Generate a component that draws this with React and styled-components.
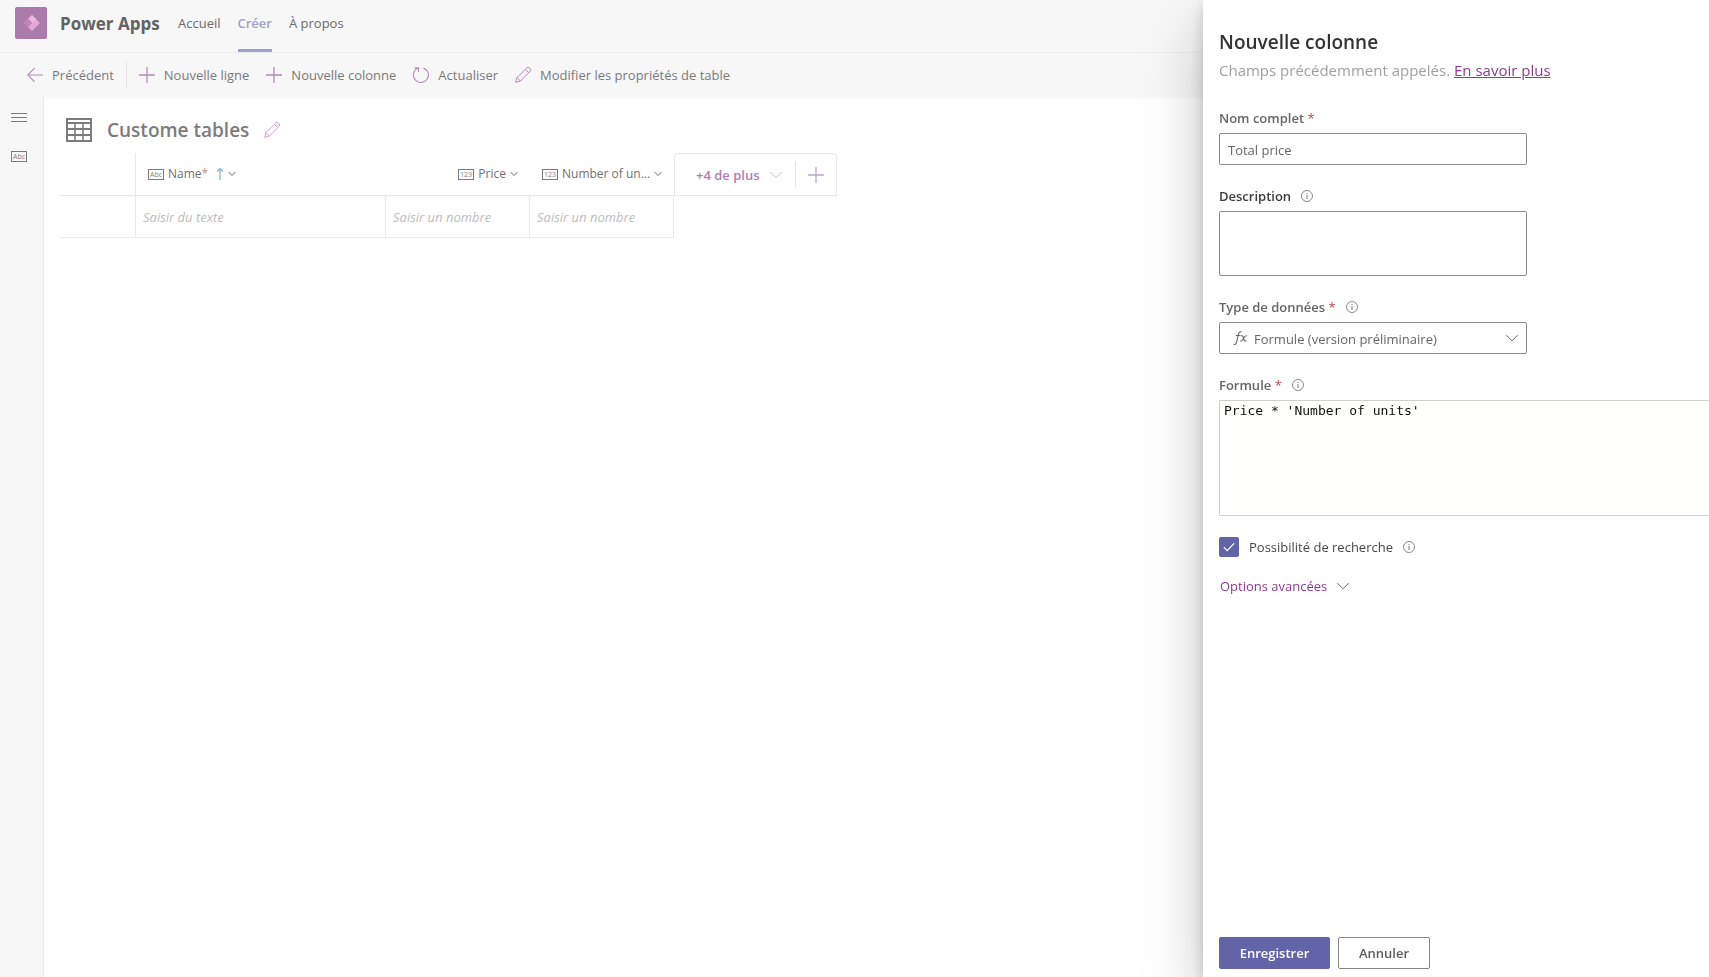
import React from "react";
import styled, { createGlobalStyle, css } from "styled-components";

const GlobalStyle = createGlobalStyle`
  *, *::before, *::after { box-sizing: border-box; }
  html, body, #root { height: 100%; }
  body {
    margin: 0;
    overflow: hidden;
    background: #fff;
    color: #6e6e6e;
    font: 14px/20px "Segoe UI", "Open Sans", "Noto Sans", sans-serif;
  }
  button, input, textarea, select { font: inherit; color: inherit; }
  button { padding: 0; border: 0; background: none; cursor: pointer; white-space: nowrap; }
  svg { display: block; flex: none; }
`;

const Shell = styled.div`
  display: flex;
  flex-direction: column;
  min-height: 100%;
`;

const Header = styled.header`
  display: flex;
  align-items: stretch;
  height: 53px;
  padding-left: 15px;
  background: #f7f7f7;
  border-bottom: 1px solid #efefef;
`;

const Brand = styled.div`
  display: flex;
  align-items: flex-start;
  gap: 13px;
  width: 155px;
  padding-top: 7px;
  color: #636363;
  font-size: 17px;
  font-weight: 700;
  line-height: 34px;
  white-space: nowrap;
`;

const Nav = styled.nav`
  display: flex;
  gap: 17px;
  padding-left: 8px;
`;

const NavLink = styled.a`
  padding-top: 13px;
  color: #6a6a6a;
  font-size: 13px;
  text-decoration: none;
  border-bottom: 3px solid transparent;
  ${(p) =>
    p.$active &&
    css`
      color: #a0a0cb;
      font-weight: 600;
      border-color: #a0a0cb;
    `}
`;

const Toolbar = styled.div`
  display: flex;
  align-items: center;
  gap: 12px;
  height: 44px;
  padding-left: 27px;
  background: #f7f7f7;
  box-shadow: 0 1px 4px rgba(0, 0, 0, 0.03);
`;

const ToolGroup = styled.div`
  display: flex;
  gap: 17px;
`;

const ToolButton = styled.button`
  display: flex;
  align-items: center;
  gap: 9px;
  color: #7a7a7a;
  font-size: 13px;
  svg { color: #b58bb8; }
`;

const Divider = styled.span`
  width: 1px;
  height: ${(p) => p.$height}px;
  background: #e6e6e6;
`;

const Body = styled.div`
  display: flex;
  flex: 1;
`;

const Rail = styled.aside`
  display: flex;
  flex-direction: column;
  align-items: flex-start;
  gap: 26px;
  width: 44px;
  padding: 12px 11px;
  background: #f7f7f7;
  border-right: 1px solid #ebebeb;
`;

const RailButton = styled.button`
  display: flex;
  color: #7c7c7c;
`;

const Main = styled.main`
  flex: 1;
  padding: 16px;
`;

const TitleRow = styled.div`
  display: flex;
  align-items: center;
  gap: 15px;
  height: 34px;
  padding-left: 6px;
  color: #7c7c7c;
`;

const Title = styled.h1`
  margin: 0;
  font-size: 19px;
  line-height: 28px;
  font-weight: 600;
`;

const EditButton = styled.button`
  display: flex;
  color: #d99bd2;
`;

const Grid = styled.div`
  display: flex;
  align-items: flex-start;
  margin-top: 6px;
`;

const Table = styled.table`
  width: 614px;
  table-layout: fixed;
  border-collapse: separate;
  border-spacing: 0;
`;

const HeadCell = styled.th`
  width: ${(p) => p.$width}px;
  height: 43px;
  padding: 0 12px;
  border-bottom: 1px solid #e8e8e8;
  border-right: ${(p) => (p.$ruled ? "1px solid #e8e8e8" : "0")};
`;

const ColumnButton = styled.button`
  display: flex;
  align-items: center;
  gap: 4px;
  height: 20px;
  margin-left: ${(p) => (p.$end ? "auto" : "0")};
  color: #707070;
  font-size: 12px;
  font-weight: 500;
`;

const SortMarks = styled.span`
  display: flex;
  align-items: center;
`;

const Cell = styled.td`
  height: 42px;
  padding: 0 7px;
  border-right: 1px solid #e8e8e8;
  border-bottom: 1px solid #e8e8e8;
`;

const CellInput = styled.input`
  width: 100%;
  padding: 0;
  border: 0;
  outline: 0;
  background: none;
  font-size: 13px;
  font-style: italic;
  &::placeholder { color: #bcbcbc; opacity: 1; }
`;

const MoreBox = styled.div`
  display: flex;
  align-items: center;
  width: 163px;
  height: 43px;
  padding: 0 12px 0 21px;
  border: 1px solid #e8e8e8;
  border-radius: 4px 4px 0 0;
`;

const MoreButton = styled.button`
  display: flex;
  align-items: center;
  gap: 10px;
  color: #ae7fb0;
  font-size: 13px;
  font-weight: 600;
  svg { color: #c0c0c0; }
`;

const AddButton = styled.button`
  display: flex;
  align-items: center;
  gap: 12px;
  margin-left: auto;
  color: #bba9c2;
`;

const Star = styled.span`
  color: ${(p) => (p.$dim ? "#d08a8c" : "#b8474a")};
  font-weight: 400;
`;

const Panel = styled.aside`
  position: fixed;
  top: 0;
  right: 0;
  bottom: 0;
  display: flex;
  flex-direction: column;
  width: 506px;
  padding: 28px 0 8px 16px;
  overflow: hidden;
  background: #fff;
  box-shadow: 0 26px 58px rgba(0, 0, 0, 0.22), 0 5px 14px rgba(0, 0, 0, 0.18);
`;

const PanelTitle = styled.h2`
  margin: 0;
  color: #323232;
  font-size: 19px;
  line-height: 28px;
  font-weight: 600;
`;

const Intro = styled.p`
  margin: 3px 0 25px;
  color: #a0a0a0;
  font-size: 15px;
  line-height: 22px;
  a { color: #8f3a92; }
`;

const Field = styled.div`
  width: ${(p) => (p.$wide ? "auto" : "308px")};
  margin-bottom: ${(p) => (p.$wide ? 21 : 19)}px;
`;

const LabelRow = styled.div`
  display: flex;
  align-items: center;
  gap: 10px;
  height: 24px;
  margin-bottom: 3px;
  color: ${(p) => (p.$strong ? "#3c3c3c" : "#666")};
  font-size: 13px;
  font-weight: 600;
`;

const control = css`
  display: block;
  width: 100%;
  border: 1px solid #8c8c8c;
  border-radius: 2px;
  outline: 0;
  background: #fff;
  color: #666;
  font-size: 13px;
`;

const TextInput = styled.input`
  ${control}
  height: 32px;
  padding: 1px 8px 0;
`;

const TextArea = styled.textarea`
  ${control}
  height: 65px;
  padding: 6px 8px;
  resize: none;
`;

const SelectBox = styled.div`
  display: flex;
  position: relative;
  color: #666;
`;

const Select = styled.select`
  ${control}
  height: 32px;
  padding: 1px 32px 0 34px;
  appearance: none;
`;

const SelectMark = styled.span`
  position: absolute;
  top: 0;
  bottom: 0;
  ${(p) => p.$side}: ${(p) => (p.$side === "left" ? 14 : 9)}px;
  display: flex;
  align-items: center;
  pointer-events: none;
`;

const Editor = styled.textarea`
  display: block;
  width: 100%;
  height: 116px;
  padding: 0 4px;
  border: 1px solid #cfcfcf;
  border-right: 0;
  border-radius: 2px 0 0 2px;
  outline: 0;
  resize: none;
  background: #fffffd;
  color: #111;
  font: 13px/19px Consolas, "DejaVu Sans Mono", "Liberation Mono", monospace;
`;

const CheckRow = styled.div`
  display: flex;
  align-items: center;
  gap: 10px;
  height: 20px;
  color: #484848;
  font-size: 13px;
`;

const CheckHolder = styled.span`
  display: grid;
  width: 20px;
  height: 20px;
  > * { grid-area: 1 / 1; }
  svg { pointer-events: none; color: #fff; place-self: center; }
`;

const Checkbox = styled.input`
  width: 20px;
  height: 20px;
  margin: 0;
  appearance: none;
  border: 1px solid #6264a7;
  border-radius: 2px;
  &:checked { background: #6264a7; }
`;

const Advanced = styled.button`
  display: flex;
  align-items: center;
  align-self: flex-start;
  gap: 10px;
  margin: 19px 0 0 1px;
  color: #8f3a92;
  font-size: 13px;
  svg { color: #666; }
`;

const Footer = styled.footer`
  display: flex;
  gap: 8px;
  margin-top: auto;
`;

const ActionButton = styled.button`
  width: ${(p) => (p.$primary ? 111 : 92)}px;
  height: 32px;
  border: 1px solid ${(p) => (p.$primary ? "#6264a7" : "#868686")};
  border-radius: 2px;
  background: ${(p) => (p.$primary ? "#6264a7" : "#fff")};
  color: ${(p) => (p.$primary ? "#fff" : "#5c5c5c")};
  font-size: 13px;
  font-weight: 600;
`;

const Icon = ({ size = 16, box = 16, children, ...rest }) => (
  <svg
    width={size}
    height={size}
    viewBox={`0 0 ${box} ${box}`}
    fill="none"
    stroke="currentColor"
    aria-hidden="true"
    {...rest}
  >
    {children}
  </svg>
);

const Plus = () => <Icon strokeWidth="1.3"><path d="M8 0v16M0 8h16" /></Icon>;
const Back = () => <Icon strokeWidth="1.1"><path d="M16 8H.8M7.6 1.2L.8 8l6.8 6.8" /></Icon>;
const Refresh = () => (
  <Icon strokeWidth="1.1"><path d="M10.3.9A7.5 7.5 0 1 1 5 1.1M1.6.9H5.6V5" /></Icon>
);
const Pencil = () => (
  <Icon>
    <path d="M.7 15.3l1.2-4.7L11.8.9a1.9 1.9 0 0 1 2.7 0l.6.6a1.9 1.9 0 0 1 0 2.7L5.4 14.1zM10.4 2.3l3.3 3.3M1.9 10.6l3.5 3.5" />
  </Icon>
);
const Chevron = () => (
  <Icon size={12} box={12}>
    <path d="M.4 3.2L6 8.8l5.6-5.6" />
  </Icon>
);
const SmallChevron = () => (
  <Icon size={8} box={8} stroke="#a8a8a8" strokeWidth="1.2">
    <path d="M.5 2L4 5.5 7.5 2" />
  </Icon>
);
const SortUp = () => (
  <Icon stroke="#7fb0da" strokeWidth="1.2">
    <path d="M8 14V2.5M5 5.5l3-3 3 3" />
  </Icon>
);
const Info = () => (
  <Icon size={12} box={12} stroke="#6a6a6a">
    <circle cx="6" cy="6" r="5.5" strokeWidth=".8" />
    <path d="M6 5v4M6 3v1" strokeWidth=".9" />
  </Icon>
);
const TypeBadge = ({ text }) => (
  <svg width="16" height="11" viewBox="0 0 16 11" aria-hidden="true">
    <rect x=".5" y=".5" width="15" height="10" fill="none" stroke="#7c7c7c" />
    <text x="8" y="8" fontSize="7" textAnchor="middle" fill="#7c7c7c">{text}</text>
  </svg>
);
const TableIcon = () => (
  <svg width="26" height="24" viewBox="0 0 26 24" fill="none" stroke="currentColor" strokeWidth="2" aria-hidden="true">
    <path d="M1 1h24v22H1zM1 5h24M1 11h24M1 17h24" />
    <path d="M9 5v18M17 5v18" strokeWidth="1.5" />
  </svg>
);
const Logo = () => (
  <svg width="32" height="32" viewBox="0 0 32 32" aria-hidden="true">
    <rect width="32" height="32" rx="2" fill="#ab7bab" />
    <path d="M17 8l8 8-8 8-8-8z" fill="#c27fb9" />
    <path d="M17 8l7.4 7.4a1 1 0 0 1 0 1.2L17 24l-4-4 4-4-4-4z" fill="#e4a9d8" />
    <path d="M13.5 11.5L17 8l4 4-4 4z" fill="#efc3e4" opacity=".6" />
    <path d="M8 16l5-4.5 4 4.5-4 4z" fill="#c583bd" />
  </svg>
);
const Fx = () => (
  <Icon strokeWidth="1.1">
    <path d="M.6 14.3c2 .6 2.7-.8 3.2-3L5.5 4.2C6 2 7 1.3 8.8 1.9M2.8 5.5h4.7M8 6c1.5-.8 2 0 2.5 2.1.6 2.5 1.2 3.7 3 2.5M14 5.8c-1.6-.5-2.6 1-3.5 2.6-.9 1.6-1.7 2.9-3.2 2.5" />
  </Icon>
);

export default function App() {
  return (
    <>
      <GlobalStyle />
      <Shell>
        <Header>
          <Brand><Logo />Power Apps</Brand>
          <Nav>
            <NavLink href="#accueil">Accueil</NavLink>
            <NavLink href="#creer" $active>Créer</NavLink>
            <NavLink href="#apropos">À propos</NavLink>
          </Nav>
        </Header>
        <Toolbar>
          <ToolButton><Back />Précédent</ToolButton>
          <Divider $height={28} />
          <ToolGroup>
            <ToolButton><Plus />Nouvelle ligne</ToolButton>
            <ToolButton><Plus />Nouvelle colonne</ToolButton>
            <ToolButton><Refresh />Actualiser</ToolButton>
            <ToolButton><Pencil />Modifier les propriétés de table</ToolButton>
          </ToolGroup>
        </Toolbar>
        <Body>
          <Rail>
            <RailButton aria-label="Menu">
              <Icon><path d="M0 4.5h16M0 8.5h16M0 12.5h16" /></Icon>
            </RailButton>
            <RailButton aria-label="Texte"><TypeBadge text="Abc" /></RailButton>
          </Rail>
          <Main>
            <TitleRow>
              <TableIcon />
              <Title>Custome tables</Title>
              <EditButton aria-label="Renommer"><Pencil /></EditButton>
            </TitleRow>
            <Grid>
              <Table>
                <thead>
                  <tr>
                    <HeadCell $width={76} $ruled />
                    <HeadCell $width={250}>
                      <ColumnButton>
                        <TypeBadge text="Abc" />
                        <span>Name<Star $dim>*</Star></span>
                        <SortMarks><SortUp /><SmallChevron /></SortMarks>
                      </ColumnButton>
                    </HeadCell>
                    <HeadCell $width={144}>
                      <ColumnButton $end><TypeBadge text="123" />Price<SmallChevron /></ColumnButton>
                    </HeadCell>
                    <HeadCell $width={144}>
                      <ColumnButton $end><TypeBadge text="123" />Number of un...<SmallChevron /></ColumnButton>
                    </HeadCell>
                  </tr>
                </thead>
                <tbody>
                  <tr>
                    <Cell />
                    <Cell><CellInput aria-label="Name" placeholder="Saisir du texte" /></Cell>
                    <Cell><CellInput aria-label="Price" placeholder="Saisir un nombre" /></Cell>
                    <Cell><CellInput aria-label="Number of units" placeholder="Saisir un nombre" /></Cell>
                  </tr>
                </tbody>
              </Table>
              <MoreBox>
                <MoreButton>+4 de plus<Chevron /></MoreButton>
                <AddButton aria-label="Ajouter une colonne"><Divider $height={25} /><Plus /></AddButton>
              </MoreBox>
            </Grid>
          </Main>
        </Body>
      </Shell>

      <Panel aria-label="Nouvelle colonne">
        <PanelTitle>Nouvelle colonne</PanelTitle>
        <Intro>Champs précédemment appelés. <a href="#savoir-plus">En savoir plus</a></Intro>
        <Field>
          <LabelRow><label htmlFor="nom">Nom complet <Star>*</Star></label></LabelRow>
          <TextInput id="nom" defaultValue="Total price" />
        </Field>
        <Field>
          <LabelRow $strong><label htmlFor="description">Description</label><Info /></LabelRow>
          <TextArea id="description" />
        </Field>
        <Field>
          <LabelRow><label htmlFor="type">Type de données <Star>*</Star></label><Info /></LabelRow>
          <SelectBox>
            <Select id="type"><option>Formule (version préliminaire)</option></Select>
            <SelectMark $side="left"><Fx /></SelectMark>
            <SelectMark $side="right"><Chevron /></SelectMark>
          </SelectBox>
        </Field>
        <Field $wide>
          <LabelRow><label htmlFor="formule">Formule <Star>*</Star></label><Info /></LabelRow>
          <Editor id="formule" spellCheck={false} defaultValue="Price * 'Number of units'" />
        </Field>
        <CheckRow>
          <CheckHolder>
            <Checkbox id="recherche" type="checkbox" defaultChecked />
            <Icon size={12} box={12} strokeWidth="1.2"><path d="M.8 6.2l3.4 3.4 7-7.2" /></Icon>
          </CheckHolder>
          <label htmlFor="recherche">Possibilité de recherche</label>
          <Info />
        </CheckRow>
        <Advanced>Options avancées<Chevron /></Advanced>
        <Footer>
          <ActionButton $primary>Enregistrer</ActionButton>
          <ActionButton>Annuler</ActionButton>
        </Footer>
      </Panel>
    </>
  );
}
